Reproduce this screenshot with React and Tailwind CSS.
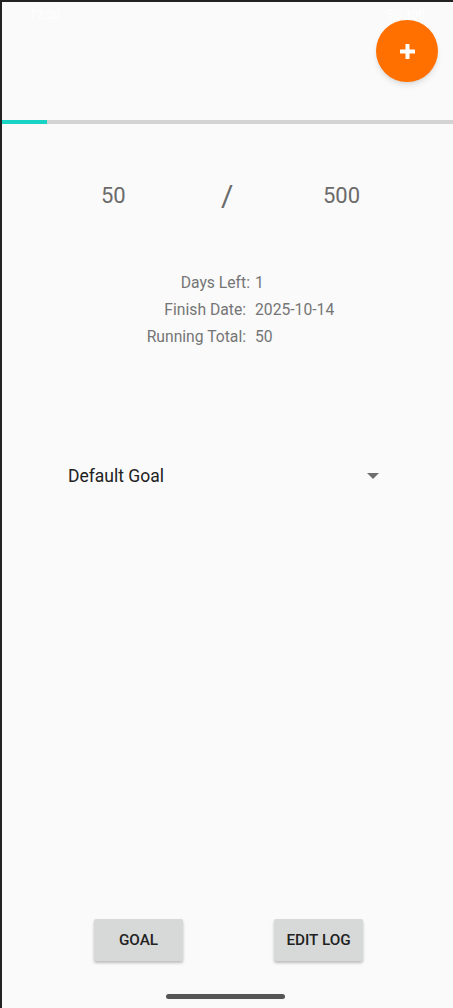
function InfoRow({ label, value, pad }) {
    return (
        <div className="flex h-[27px] items-center">
            <div className={`w-[248px] text-right ${pad}`}>{label}</div>
            <div className="pl-[5px]">{value}</div>
        </div>
    );
}

function App() {
    return (
        <div
            className="relative w-[453px] h-[1008px] bg-[#fafafa] border-t-2 border-l-2 border-[#222] flex flex-col overflow-hidden"
            style={{ fontFamily: "Roboto, 'Liberation Sans', sans-serif" }}
        >
            {/* status bar (white on white) */}
            <div className="h-[26px] flex items-center justify-between px-[28px] text-[12px] text-white">
                <span>12:00</span>
                <span>5G 100</span>
            </div>

            <button className="absolute left-[374px] top-[18px] w-[62px] h-[62px] rounded-full bg-[#ff7000] shadow-md flex items-center justify-center">
                <svg width="15" height="15" viewBox="0 0 15 15">
                    <rect x="5.5" y="0" width="4" height="15" rx="0.5" fill="#fff" />
                    <rect x="0" y="5.5" width="15" height="4" rx="0.5" fill="#fff" />
                </svg>
            </button>

            {/* progress */}
            <div className="mt-[92px] h-[4px] w-full bg-[#d3d3d3] flex">
                <div className="w-[45px] h-full bg-[#19d3c5]" />
            </div>

            {/* count */}
            <div className="mt-[51px] h-[40px] flex items-center text-[#6b6b6b] text-[22px]">
                <div className="w-[99px]" />
                <div className="w-[120px]">50</div>
                <div className="w-[102px] text-[30px]">/</div>
                <div>500</div>
            </div>

            {/* info */}
            <div className="mt-[54px] flex flex-col text-[15.7px] text-[#757575]">
                <InfoRow label="Days Left:" value="1" pad="" />
                <InfoRow label="Finish Date:" value="2025-10-14" pad="pr-[4px]" />
                <InfoRow label="Running Total:" value="50" pad="pr-[4px]" />
            </div>

            {/* spinner */}
            <div className="mt-[110px] h-[32px] ml-[66px] mr-[74px] flex items-center justify-between">
                <span className="text-[17.5px] text-[#212121]">Default Goal</span>
                <svg width="12" height="6" viewBox="0 0 12 6">
                    <path d="M0 0 L12 0 L6 6 Z" fill="#6e6e6e" />
                </svg>
            </div>

            <div className="flex-1" />

            {/* buttons */}
            <div className="flex ml-[92px] gap-[91px]">
                <button className="w-[89px] h-[42px] bg-[#d7d8d8] rounded-[2px] shadow-[0_2px_3px_rgba(0,0,0,0.25)] text-[15.3px] font-medium text-[#222]">
                    GOAL
                </button>
                <button className="w-[89px] h-[42px] bg-[#d7d8d8] rounded-[2px] shadow-[0_2px_3px_rgba(0,0,0,0.25)] text-[15.3px] font-medium text-[#222]">
                    EDIT LOG
                </button>
            </div>

            {/* home indicator */}
            <div className="mt-[33px] mb-[9px] flex justify-center pr-[4px]">
                <div className="w-[119px] h-[5px] rounded-full bg-[#555]" />
            </div>
        </div>
    );
}

export default App
